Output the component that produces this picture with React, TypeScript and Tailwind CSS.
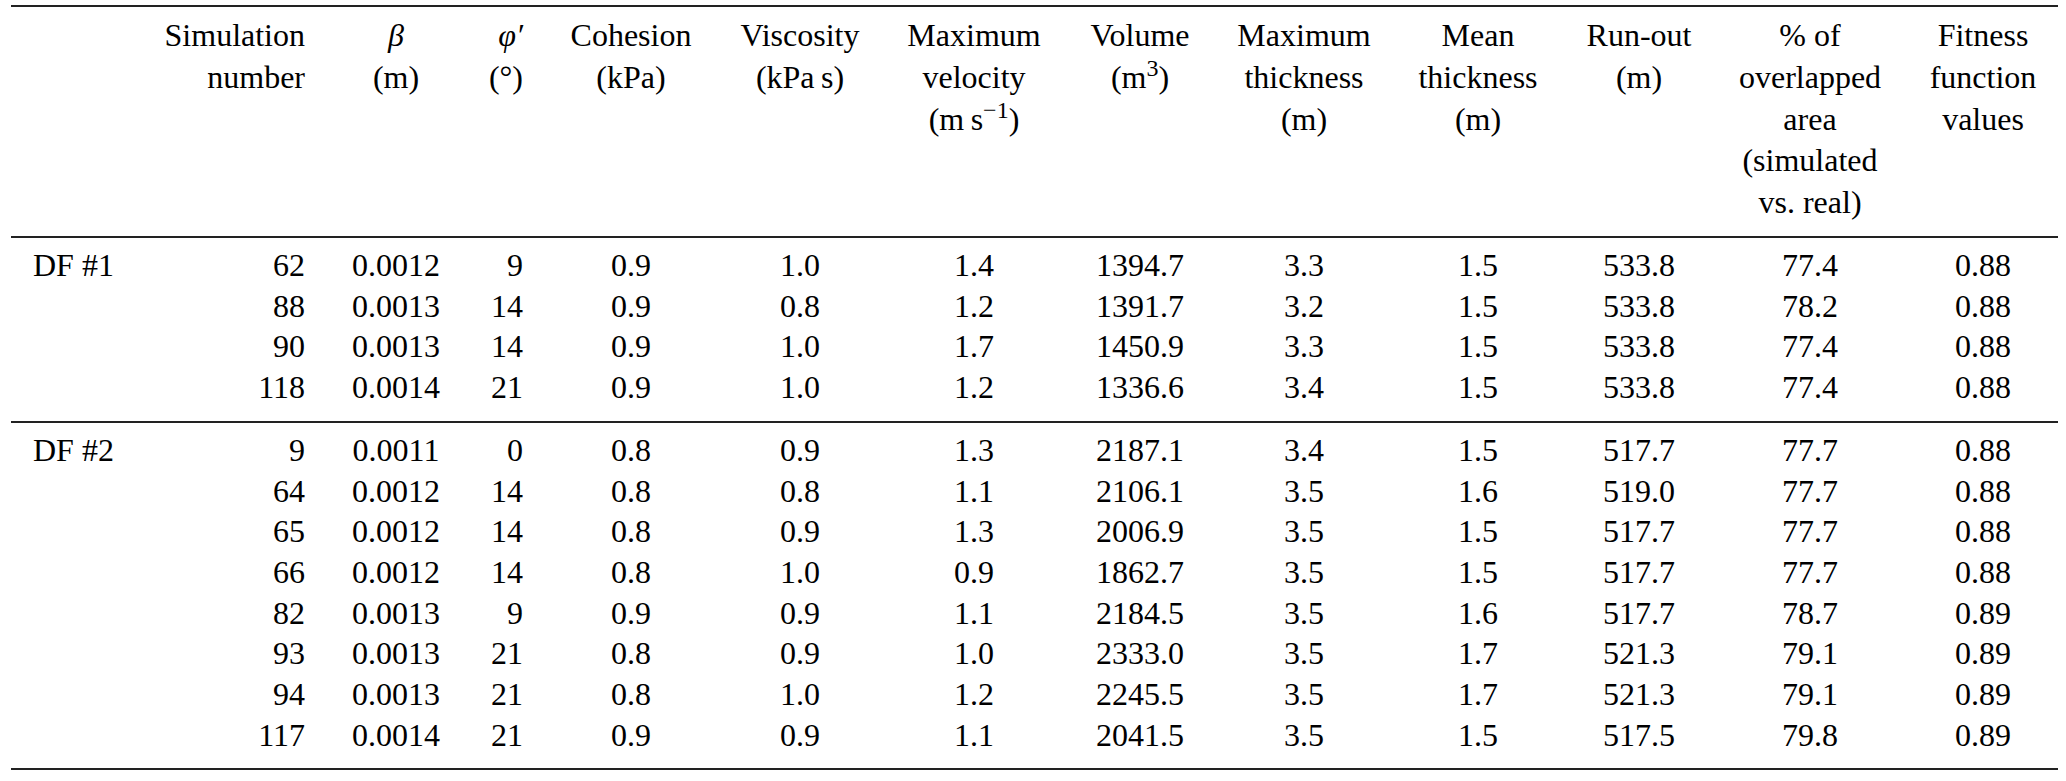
import React from "react";

const cols =
  "grid grid-cols-[139px_163px_166px_52px_200px_138px_210px_122px_206px_142px_180px_162px_167px]";

const align = [
  "text-left pl-[22px]",
  "text-right pr-[8px]",
  "text-center",
  "text-right pr-[8px]",
  "text-center",
  "text-center",
  "text-center",
  "text-center",
  "text-center",
  "text-center",
  "text-center",
  "text-center",
  "text-center pl-[17px]",
];

const header: React.ReactNode[][] = [
  [],
  ["Simulation", "number"],
  [<i key="b">β</i>, "(m)"],
  [<i key="p">φ′</i>, "(°)"],
  ["Cohesion", "(kPa)"],
  ["Viscosity", "(kPa\u2009s)"],
  [
    "Maximum",
    "velocity",
    <span key="v">
      (m{"\u2009"}s<sup>−1</sup>)
    </span>,
  ],
  [
    "Volume",
    <span key="m">
      (m<sup>3</sup>)
    </span>,
  ],
  ["Maximum", "thickness", "(m)"],
  ["Mean", "thickness", "(m)"],
  ["Run-out", "(m)"],
  ["% of", "overlapped", "area", "(simulated", "vs. real)"],
  ["Fitness", "function", "values"],
];

const df1 = [
  ["62", "0.0012", "9", "0.9", "1.0", "1.4", "1394.7", "3.3", "1.5", "533.8", "77.4", "0.88"],
  ["88", "0.0013", "14", "0.9", "0.8", "1.2", "1391.7", "3.2", "1.5", "533.8", "78.2", "0.88"],
  ["90", "0.0013", "14", "0.9", "1.0", "1.7", "1450.9", "3.3", "1.5", "533.8", "77.4", "0.88"],
  ["118", "0.0014", "21", "0.9", "1.0", "1.2", "1336.6", "3.4", "1.5", "533.8", "77.4", "0.88"],
];

const df2 = [
  ["9", "0.0011", "0", "0.8", "0.9", "1.3", "2187.1", "3.4", "1.5", "517.7", "77.7", "0.88"],
  ["64", "0.0012", "14", "0.8", "0.8", "1.1", "2106.1", "3.5", "1.6", "519.0", "77.7", "0.88"],
  ["65", "0.0012", "14", "0.8", "0.9", "1.3", "2006.9", "3.5", "1.5", "517.7", "77.7", "0.88"],
  ["66", "0.0012", "14", "0.8", "1.0", "0.9", "1862.7", "3.5", "1.5", "517.7", "77.7", "0.88"],
  ["82", "0.0013", "9", "0.9", "0.9", "1.1", "2184.5", "3.5", "1.6", "517.7", "78.7", "0.89"],
  ["93", "0.0013", "21", "0.8", "0.9", "1.0", "2333.0", "3.5", "1.7", "521.3", "79.1", "0.89"],
  ["94", "0.0013", "21", "0.8", "1.0", "1.2", "2245.5", "3.5", "1.7", "521.3", "79.1", "0.89"],
  ["117", "0.0014", "21", "0.9", "0.9", "1.1", "2041.5", "3.5", "1.5", "517.5", "79.8", "0.89"],
];

const Group = ({ label, rows }: { label: string; rows: string[][] }) => (
  <div className="border-t-2 border-[#222] pt-[7px] pb-[13px]">
    {rows.map((row, i) => (
      <div key={i} className={`${cols} leading-[40.7px]`}>
        <div className={align[0]}>{i === 0 ? label : ""}</div>
        {row.map((cell, j) => (
          <div key={j} className={`${align[j + 1]} whitespace-nowrap`}>
            {cell}
          </div>
        ))}
      </div>
    ))}
  </div>
);

export default function App() {
  return (
    <div className="w-[2066px] h-[781px] bg-white text-black [font-family:'Liberation_Serif',serif] text-[32px] overflow-hidden">
      <div className="ml-[11px] w-[2047px] pt-[5px]">
        <div className="border-t-2 border-[#222] pt-[8px] pb-[12px]">
          <div className={`${cols} leading-[41.8px]`}>
            {header.map((lines, j) => (
              <div key={j} className={`${align[j]} whitespace-nowrap flex flex-col`}>
                {lines.map((line, k) => (
                  <div key={k}>{line}</div>
                ))}
              </div>
            ))}
          </div>
        </div>
        <Group label="DF #1" rows={df1} />
        <Group label="DF #2" rows={df2} />
        <div className="border-t-2 border-[#222]" />
      </div>
    </div>
  );
}
